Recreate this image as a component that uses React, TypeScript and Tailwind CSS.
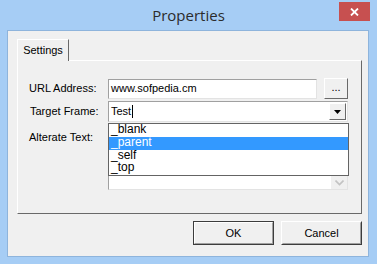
import React from 'react';

const sunken = 'border border-t-[#a0a0a0] border-l-[#a0a0a0] border-b-[#e3e3e3] border-r-[#e3e3e3] bg-white';
const raised = 'border border-t-white border-l-white border-b-[#696969] border-r-[#696969] bg-[#f0f0f0]';

function Button({ label, isDefault }: { label: string; isDefault?: boolean }) {
  return (
    <div className={`w-[81px] h-[24px] ${isDefault ? 'border border-[#3c3c3c]' : 'border border-t-white border-l-white border-b-[#3c3c3c] border-r-[#3c3c3c]'}`}>
      <div className={`w-full h-full flex items-center justify-center ${isDefault ? 'border border-t-white border-l-white border-b-[#a0a0a0] border-r-[#a0a0a0]' : 'border border-transparent border-b-[#a0a0a0] border-r-[#a0a0a0]'} text-[11px] text-black`}>
        {label}
      </div>
    </div>
  );
}

export default function App() {
  const options = ['_blank', '_parent', '_self', '_top'];
  return (
    <div className="w-[377px] h-[264px] bg-[#a6cdf5] flex flex-col" style={{ fontFamily: '"Liberation Sans", Arial, sans-serif' }}>
      <div className="h-[30px] relative flex items-center justify-center shrink-0">
        <span className="text-[15px] text-[#2b2b2b] mt-[1px]" style={{ fontFamily: '"Open Sans", "Noto Sans", sans-serif' }}>Properties</span>
        <div className="absolute left-[339px] top-[2px] w-[31px] h-[19px] bg-[#c75050] flex items-center justify-center">
          <svg width="9" height="8" viewBox="0 0 9 8">
            <path d="M1 0.5 L8 7.5 M8 0.5 L1 7.5" stroke="white" strokeWidth="1.8" />
          </svg>
        </div>
      </div>
      <div className="ml-[7px] w-[362px] h-[227px] border border-[#8eb4dc] bg-[#f0f0f0] pl-[9px] pt-[8px] flex flex-col">
        <div className="flex relative z-10 -mb-[1px]">
          <div className="w-[52px] h-[22px] bg-[#f0f0f0] border-t border-l border-white border-r border-r-[#696969] flex items-center justify-center text-[11px] text-black pb-[1px]">
            Settings
          </div>
        </div>
        <div className="w-[345px] h-[154px] border border-t-white border-l-white border-b-[#696969] border-r-[#696969] pt-[17px] pl-[10px] flex flex-col text-[11px] text-black">
          <div className="flex items-center h-[21px]">
            <div className="w-[80px] pl-[1px]">URL Address:</div>
            <div className={`w-[209px] h-[20px] ${sunken} flex items-center pl-[2px]`}>
              <span>www.sofpedia.cm</span>
            </div>
            <div className={`ml-[7px] w-[24px] h-[21px] ${raised} flex items-center justify-center pb-[2px]`}>...</div>
          </div>
          <div className="relative flex items-center h-[21px] mt-[2px]">
            <div className="w-[80px] pl-[2px]">Target Frame:</div>
            <div className={`w-[240px] h-[21px] ${sunken} flex items-center`}>
              <span className="pl-[2px]">Test</span>
              <span className="w-[1px] h-[13px] bg-black ml-[1px]" />
              <div className="ml-auto mr-[1px] w-[17px] h-[17px] border border-t-white border-l-white border-b-[#696969] border-r-[#696969] bg-[#f0f0f0] flex items-center justify-center">
                <svg width="7" height="4" viewBox="0 0 7 4"><path d="M0 0 H7 L3.5 4 Z" fill="black" /></svg>
              </div>
            </div>
            <div className="absolute left-[80px] top-[22px] w-[241px] h-[53px] border border-[#646464] bg-white z-10 flex flex-col">
              {options.map((o) => (
                <div key={o} className={`h-[13px] leading-[11px] pl-[2px] text-[12px] ${o === '_parent' ? 'bg-[#3399ff] text-white' : ''}`}>{o}</div>
              ))}
            </div>
          </div>
          <div className="flex items-start mt-[3px]">
            <div className="w-[80px] pl-[1px] pt-[4px]">Alterate Text:</div>
            <div className={`w-[240px] h-[65px] ${sunken} flex justify-end`}>
              <div className="w-[16px] h-full bg-[#f0f0f0] flex flex-col justify-end items-center pb-[3px]">
                <svg width="9" height="6" viewBox="0 0 9 6"><path d="M0.5 0.5 L4.5 4.5 L8.5 0.5" stroke="#c3c3c3" strokeWidth="1.6" fill="none" /></svg>
              </div>
            </div>
          </div>
        </div>
        <div className="flex justify-end gap-[7px] w-[345px] mt-[7px]">
          <Button label="OK" isDefault />
          <Button label="Cancel" />
        </div>
      </div>
    </div>
  );
}
